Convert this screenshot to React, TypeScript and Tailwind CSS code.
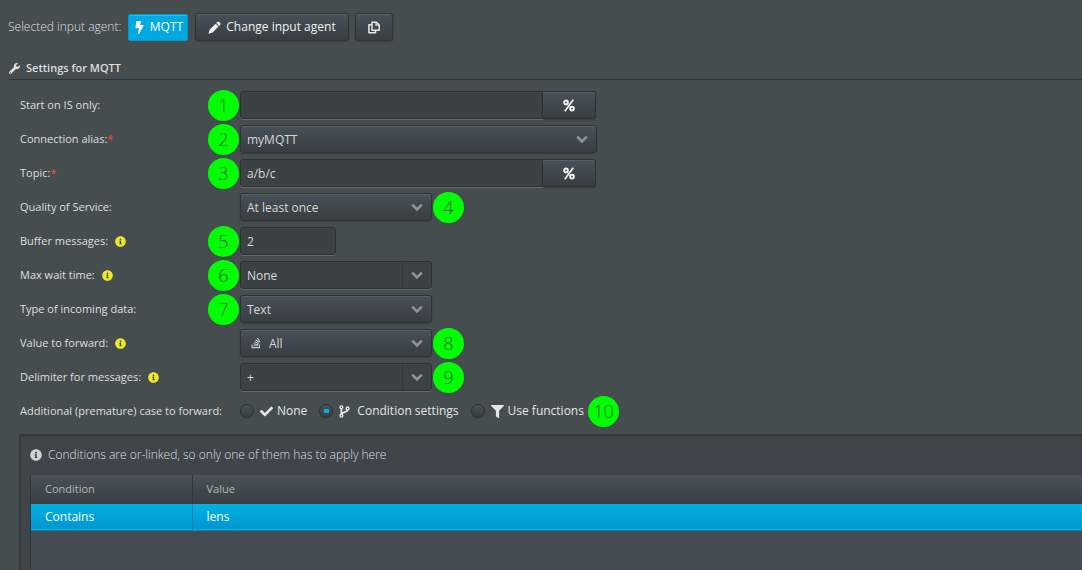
import type { ReactNode } from "react";
import { FaBolt, FaCheck, FaFilter, FaInfoCircle, FaStackOverflow, FaWrench } from "react-icons/fa";

const raised =
  "border border-[#2f3436] bg-linear-to-b from-[#485158] to-[#383d43] shadow-[inset_0_1px_0_#596167,0_1px_2px_rgba(0,0,0,0.2)]";
const sunken = "border border-[#2d3233] bg-[#3c4244] shadow-[0_1px_0_#61676a]";

function Badge({ n }: { n: number }) {
  return (
    <span className="-my-1 flex size-[31px] shrink-0 items-center justify-center rounded-full bg-[#00ff00] pb-px font-['Open_Sans',sans-serif] text-lg leading-none font-light text-[#006400]">
      {n}
    </span>
  );
}

function Chevron() {
  return (
    <svg viewBox="0 0 12 12" className="size-3 text-[#8f9496]" fill="none" stroke="currentColor" strokeWidth="2.6">
      <path d="M1.2 3.6 6 8.4 10.8 3.6" />
    </svg>
  );
}

function Pencil() {
  return (
    <svg viewBox="0 0 13 13" className="size-[13px]" fill="currentColor">
      <path d="M9.3 1.1a1.4 1.4 0 0 1 2 0l.8.8a1.4 1.4 0 0 1 0 2l-1 1-2.8-2.8zM7.7 2.7l2.8 2.8-5.9 5.9L.4 12.7l1.3-4.2z" />
    </svg>
  );
}

function Copy() {
  return (
    <svg viewBox="0 0 12 13" className="h-[13px] w-3" fill="none" stroke="currentColor" strokeWidth="1.5">
      <path d="M4 1.2h4.4l2.8 2.8v5.3H4z" strokeLinejoin="round" />
      <path d="M8 1.2v3h3.2" strokeWidth="1.2" />
      <path d="M3.6 3.8H.9v8h6.6V9.6" strokeLinejoin="round" />
    </svg>
  );
}

function Percent() {
  return (
    <svg viewBox="0 0 12 13" className="h-[13px] w-3 text-[#f1f1f1]" fill="none" stroke="currentColor">
      <circle cx="3" cy="3.4" r="1.9" strokeWidth="1.9" />
      <circle cx="9" cy="9.6" r="1.9" strokeWidth="1.9" />
      <path d="M10.2.8 1.8 12.2" strokeWidth="1.8" />
    </svg>
  );
}

function Branch() {
  return (
    <svg viewBox="0 0 11 13" className="mr-[7px] h-[13px] w-[11px]" fill="none" stroke="currentColor" strokeWidth="1.4">
      <circle cx="2.4" cy="2.3" r="1.4" />
      <circle cx="2.4" cy="10.7" r="1.4" />
      <circle cx="8.6" cy="3.4" r="1.4" />
      <path d="M2.4 3.7v5.6M8.6 4.8c0 3-5.4 1.6-6 4.5" strokeWidth="1.8" />
    </svg>
  );
}

type RowProps = {
  id: string;
  label: string;
  required?: boolean;
  info?: boolean;
  left?: number;
  right?: number;
  children: ReactNode;
};

function Row({ id, label, required, info, left, right, children }: RowProps) {
  return (
    <div className="flex h-7 items-center">
      <div className="flex w-[188px] shrink-0 items-center gap-[7px] text-[11px]">
        <label htmlFor={id}>
          {label}
          {required && <span className="font-semibold text-[#f04040]">*</span>}
        </label>
        {info && <FaInfoCircle className="size-[11px] text-[#f0e92a]" />}
      </div>
      <div className="flex w-8 shrink-0">{left && <Badge n={left} />}</div>
      {children}
      {right && (
        <div className="ml-px flex">
          <Badge n={right} />
        </div>
      )}
    </div>
  );
}

function Select({ id, value, width, icon }: { id: string; value: string; width: string; icon?: ReactNode }) {
  return (
    <div className={`relative ${width}`}>
      <select
        id={id}
        className={`block h-7 w-full appearance-none rounded-[3px] pt-px pr-8 text-[#d6d8d9] ${icon ? "pl-7" : "pl-1.5"} ${raised}`}
      >
        <option>{value}</option>
      </select>
      {icon && <span className="pointer-events-none absolute inset-y-0 left-2.5 flex items-center">{icon}</span>}
      <span className="pointer-events-none absolute inset-y-0 right-[9px] flex items-center">
        <Chevron />
      </span>
    </div>
  );
}

function Combo({ id, value }: { id: string; value: string }) {
  return (
    <div className={`flex h-7 w-48 rounded-[3px] ${sunken}`}>
      <input
        id={id}
        defaultValue={value}
        className="min-w-0 flex-1 bg-transparent px-1.5 pt-px text-[#d6d8d9] outline-none"
      />
      <button
        type="button"
        aria-label="Show options"
        className="flex w-[29px] items-center justify-center border-l border-[#333839]"
      >
        <Chevron />
      </button>
    </div>
  );
}

function VariableInput({ id, value }: { id: string; value: string }) {
  return (
    <div className="flex h-7 w-[356px]">
      <input
        id={id}
        defaultValue={value}
        className={`min-w-0 flex-1 rounded-l-[3px] px-1.5 pt-px text-[#d6d8d9] outline-none ${sunken}`}
      />
      <button
        type="button"
        aria-label="Insert variable"
        className={`flex w-[53px] items-center justify-center rounded-r-[3px] border-l-0 ${raised}`}
      >
        <Percent />
      </button>
    </div>
  );
}

function Choice({ label, icon, checked }: { label: string; icon: ReactNode; checked?: boolean }) {
  return (
    <label className="flex items-center whitespace-nowrap text-[#e4e5e6]">
      <input
        type="radio"
        name="case"
        defaultChecked={checked}
        className="mr-1.5 flex size-3.5 shrink-0 appearance-none items-center justify-center rounded-full border border-[#2c3133] bg-linear-to-b from-[#475058] to-[#383d43] shadow-[0_1px_1px_rgba(0,0,0,0.15)] checked:before:block checked:before:h-1 checked:before:w-[5px] checked:before:bg-[#00b0e6] checked:before:content-['']"
      />
      {icon}
      {label}
    </label>
  );
}

export default function App() {
  return (
    <main className="flex min-h-screen flex-col overflow-x-hidden bg-[#464d4f] pt-[13px] font-['Open_Sans',sans-serif] text-xs text-[#dedfe0]">
      <header className="flex h-7 items-center pl-2">
        <span className="mr-1.5 w-[114px] whitespace-nowrap font-light">Selected input agent:</span>
        <button
          type="button"
          className="mr-[7px] flex h-[27px] w-[60px] items-center justify-center gap-1 rounded-[2px] border border-[#0496cd] bg-[#00a9e0] text-white shadow-[inset_0_1px_0_#10c4fa]"
        >
          <FaBolt className="size-[13px]" />
          MQTT
        </button>
        <button
          type="button"
          className={`mr-1.5 flex h-7 w-[154px] items-center justify-center gap-[5px] rounded-[3px] text-[#f0f0f0] ${raised}`}
        >
          <Pencil />
          Change input agent
        </button>
        <button
          type="button"
          aria-label="Copy"
          className={`flex h-7 w-[38px] items-center justify-center rounded-[3px] text-[#e8e8e8] ${raised}`}
        >
          <Copy />
        </button>
      </header>

      <h2 className="mt-4 ml-[9px] flex h-[23px] items-center gap-1.5 border-b border-[#2f3436] text-[11px] font-semibold">
        <FaWrench className="size-[11px]" />
        Settings for MQTT
      </h2>

      <form className="mt-[11px] flex flex-col gap-1.5 pl-5">
        <Row id="start" label="Start on IS only:" left={1}>
          <VariableInput id="start" value="" />
        </Row>
        <Row id="alias" label="Connection alias:" required left={2}>
          <Select id="alias" value="myMQTT" width="w-[357px]" />
        </Row>
        <Row id="topic" label="Topic:" required left={3}>
          <VariableInput id="topic" value="a/b/c" />
        </Row>
        <Row id="qos" label="Quality of Service:" right={4}>
          <Select id="qos" value="At least once" width="w-48" />
        </Row>
        <Row id="buffer" label="Buffer messages:" info left={5}>
          <input
            id="buffer"
            defaultValue="2"
            className={`h-7 w-24 rounded-[3px] px-1.5 pt-px text-[#d6d8d9] outline-none ${sunken}`}
          />
        </Row>
        <Row id="wait" label="Max wait time:" info left={6}>
          <Combo id="wait" value="None" />
        </Row>
        <Row id="type" label="Type of incoming data:" left={7}>
          <Select id="type" value="Text" width="w-48" />
        </Row>
        <Row id="forward" label="Value to forward:" info right={8}>
          <Select id="forward" value="All" width="w-48" icon={<FaStackOverflow className="size-3" />} />
        </Row>
        <Row id="delimiter" label="Delimiter for messages:" info right={9}>
          <Combo id="delimiter" value="+" />
        </Row>
        <div role="radiogroup" aria-labelledby="case-label" className="flex h-7 items-center">
          <span id="case-label" className="w-[220px] shrink-0 text-[11px]">
            Additional (premature) case to forward:
          </span>
          <div className="flex items-center gap-3">
            <Choice label="None" icon={<FaCheck className="mr-1 size-[13px]" />} />
            <Choice label="Condition settings" checked icon={<Branch />} />
            <Choice label="Use functions" icon={<FaFilter className="mr-1 size-[13px]" />} />
          </div>
          <div className="ml-1 flex">
            <Badge n={10} />
          </div>
        </div>
      </form>

      <section className="mt-[9px] ml-[19px] flex flex-1 flex-col rounded-tl-[3px] border-t border-l border-[#33383b] bg-[#3f454b] pl-2.5 shadow-[inset_0_1px_2px_rgba(0,0,0,0.25)]">
        <p className="flex h-10 items-center gap-1.5 font-light">
          <FaInfoCircle className="size-3 text-[#d0d2d4]" />
          Conditions are or-linked, so only one of them has to apply here
        </p>
        <div className="flex-1 border-l border-[#2f3437] bg-[#444b52]">
          <table className="w-full table-fixed border-collapse text-left">
            <thead>
              <tr className="h-[29px] bg-linear-to-b from-[#485258] to-[#393e43] text-[11px] text-[#b4b8bb]">
                <th className="w-[161px] border-r border-[#2f3437] p-0 pl-3.5 font-normal">Condition</th>
                <th className="p-0 pl-3.5 font-normal">Value</th>
              </tr>
            </thead>
            <tbody>
              <tr className="h-[26px] border-b border-[#0584b5] bg-linear-to-b from-[#00b2e3] to-[#0096d0] text-white">
                <td className="border-r border-[#0584b5] p-0 pl-3.5">Contains</td>
                <td className="p-0 pl-3.5">lens</td>
              </tr>
            </tbody>
          </table>
        </div>
      </section>
    </main>
  );
}
